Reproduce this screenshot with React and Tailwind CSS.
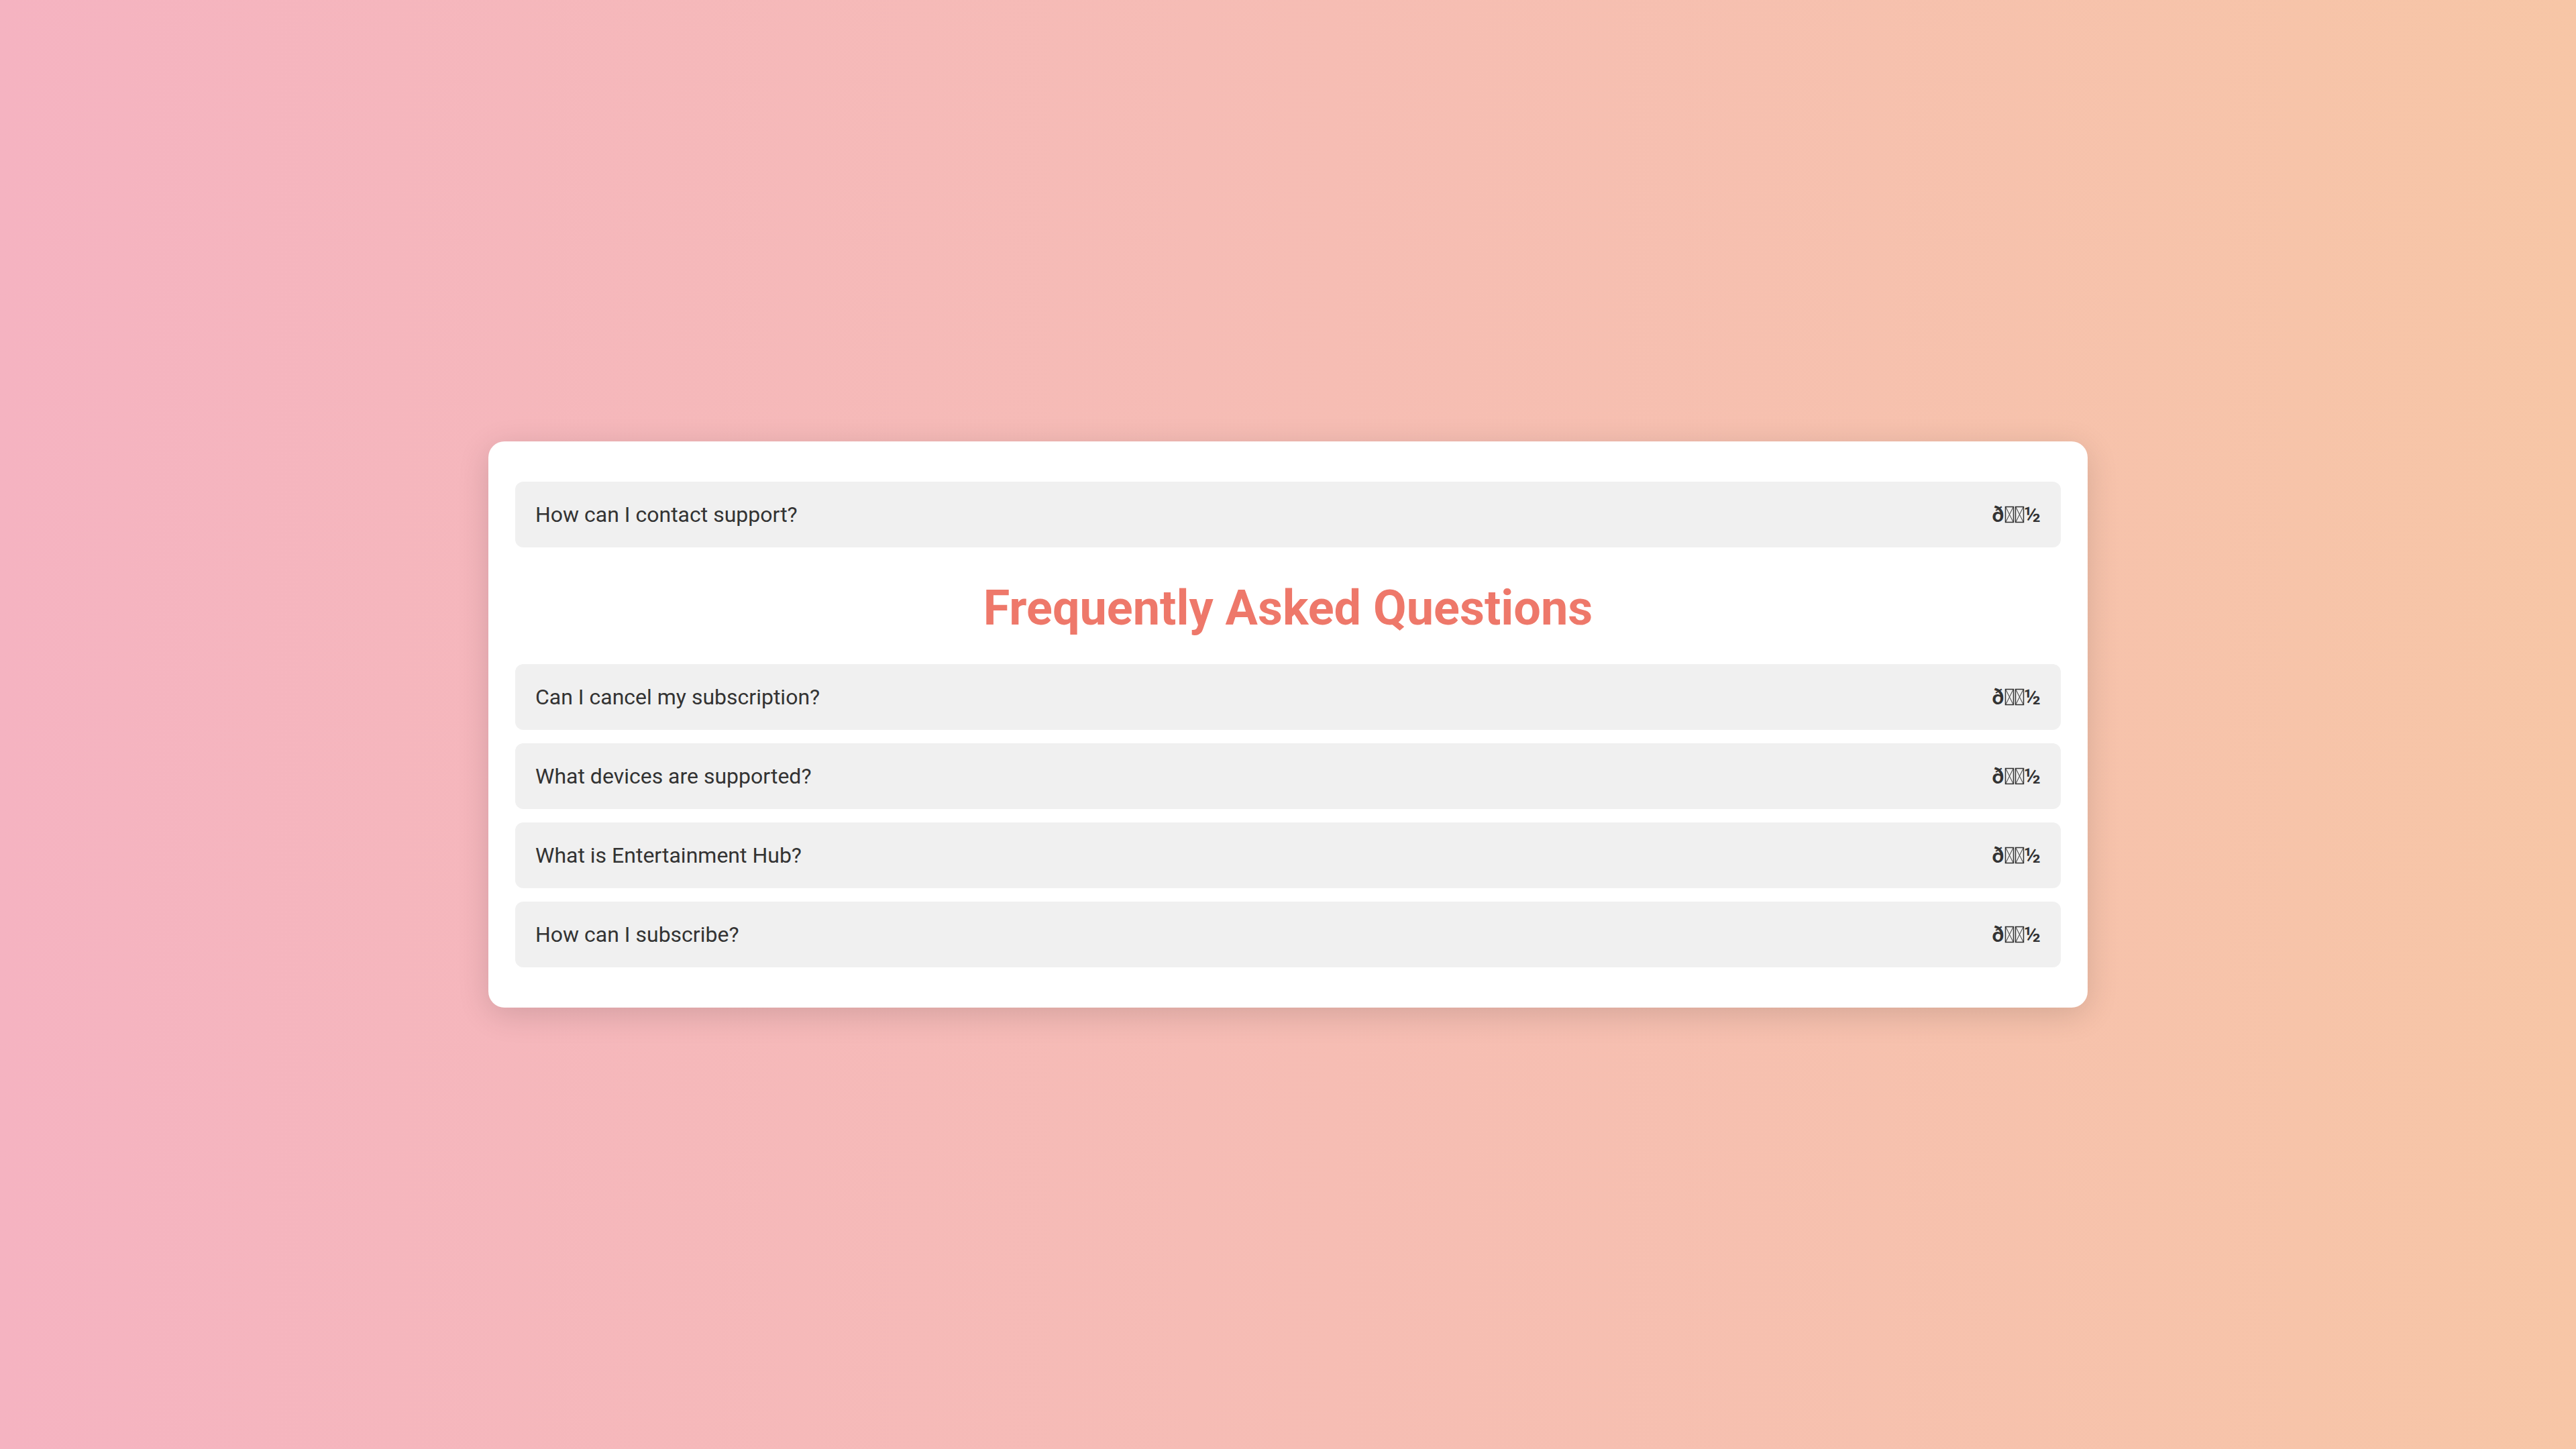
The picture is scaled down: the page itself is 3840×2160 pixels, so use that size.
import { useState } from 'react';

const faqs = [
    'How can I contact support?',
    null,
    'Can I cancel my subscription?',
    'What devices are supported?',
    'What is Entertainment Hub?',
    'How can I subscribe?',
];

// the page shows the 🔽 emoji as mojibake: ð, two missing-glyph boxes, ½
function TofuBox() {
    return (
        <svg width="15" height="26" viewBox="0 0 15 26" className="inline-block align-[-3px]">
            <rect x="1.5" y="1.5" width="12" height="23" fill="none" stroke="#333" strokeWidth="1.5" />
            <path d="M2 2 L13 24 M13 2 L2 24" stroke="#333" strokeWidth="1" fill="none" />
        </svg>
    );
}

function ToggleGlyph() {
    return (
        <span className="text-[#333333] text-[32px] leading-[40px] font-semibold whitespace-nowrap flex items-center">
            <span>{'\u00f0'}</span>
            <TofuBox />
            <TofuBox />
            <span>{'\u00bd'}</span>
        </span>
    );
}

function FaqItem({ question }) {
    const [open, setOpen] = useState(false);
    return (
        <div
            onClick={() => setOpen(o => !o)}
            className="bg-[#f0f0f0] rounded-[12px] px-[30px] py-[29px] flex items-center justify-between cursor-pointer"
        >
            <span className="text-[#333333] text-[32px] leading-[40px]">{question}</span>
            <ToggleGlyph />
        </div>
    );
}

export default function App() {
    return (
        <div
            className="min-h-screen w-full flex items-center justify-center bg-gradient-to-r from-[#f5b3c1] to-[#f7c6a6]"
            style={{ fontFamily: 'Roboto, "Noto Sans", sans-serif' }}
        >
            <div className="w-[2384px] bg-white rounded-[24px] px-[40px] py-[60px] shadow-[0_10px_48px_rgba(0,0,0,0.14)] flex flex-col">
                {faqs.map((q, i) =>
                    q === null ? (
                        <h1 key={i} className="text-center text-[#ee786a] font-bold text-[72px] leading-[84px] mt-[49px] mb-[41px]">
                            Frequently Asked Questions
                        </h1>
                    ) : (
                        <div key={i} className={i > 2 ? 'mt-[20px]' : ''}>
                            <FaqItem question={q} />
                        </div>
                    )
                )}
            </div>
        </div>
    );
}
